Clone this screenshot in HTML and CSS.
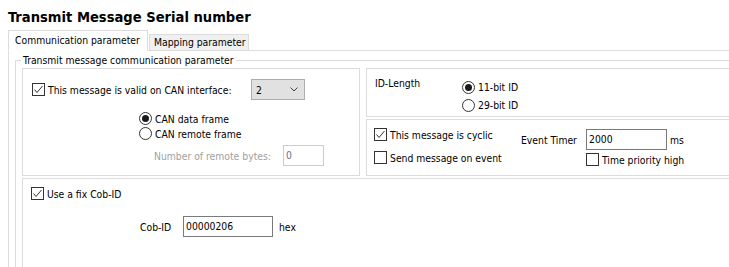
FILE: index.html
```html
<!DOCTYPE html>
<html lang="en">

<head>
    <meta charset="UTF-8" />
    <title>Transmit Message Serial number</title>
    <link rel="stylesheet" href="styles.css">
</head>

<body>
    <h1 class="title">Transmit Message Serial number</h1>

    <div class="tabs">
        <div class="tab active">Communication parameter</div>
        <div class="tab">Mapping parameter</div>
    </div>

    <div class="panel">
        <div class="group">
            <span class="group-title">Transmit message communication parameter</span>

            <div class="top-row">
                <div class="box box-interface">
                    <div class="row-valid">
                        <label class="opt valid-label">
                            <span class="check"><svg width="11" height="11" viewBox="0 0 11 11"><polyline points="1.5,5.5 4,8.5 9.5,2" /></svg></span>
                            This message is valid on CAN interface:
                        </label>
                        <div class="select">
                            <span>2</span>
                            <svg class="chevron" width="8" height="5" viewBox="0 0 8 5"><polyline points="0.5,0.5 4,4 7.5,0.5" /></svg>
                        </div>
                    </div>

                    <div class="radios">
                        <label class="opt radio-row"><span class="radio on"></span>CAN data frame</label>
                        <label class="opt radio-row"><span class="radio"></span>CAN remote frame</label>
                    </div>

                    <div class="remote-row">
                        <span class="remote-label">Number of remote bytes:</span>
                        <div class="input disabled">0</div>
                    </div>
                </div>

                <div class="side">
                    <div class="box box-id">
                        <span class="id-label">ID-Length</span>
                        <div class="id-radios">
                            <label class="opt id-row"><span class="radio on"></span>11-bit ID</label>
                            <label class="opt id-row"><span class="radio"></span>29-bit ID</label>
                        </div>
                    </div>

                    <div class="box box-cyclic">
                        <div class="cyclic-checks">
                            <label class="opt">
                                <span class="check"><svg width="11" height="11" viewBox="0 0 11 11"><polyline points="1.5,5.5 4,8.5 9.5,2" /></svg></span>
                                This message is cyclic
                            </label>
                            <label class="opt"><span class="check"></span>Send message on event</label>
                        </div>
                        <div class="timer">
                            <div class="timer-row">
                                <span class="timer-label">Event Timer</span>
                                <div class="input timer-input">2000</div>
                                <span class="unit">ms</span>
                            </div>
                            <label class="opt priority"><span class="check"></span>Time priority high</label>
                        </div>
                    </div>
                </div>
            </div>

            <div class="box box-cob">
                <label class="opt cob-check">
                    <span class="check"><svg width="11" height="11" viewBox="0 0 11 11"><polyline points="1.5,5.5 4,8.5 9.5,2" /></svg></span>
                    Use a fix Cob-ID
                </label>
                <div class="cob-row">
                    <span class="cob-label">Cob-ID</span>
                    <div class="input cob-input">00000206</div>
                    <span class="unit hex">hex</span>
                </div>
            </div>
        </div>
    </div>
</body>

</html>
```

FILE: styles.css
```css
body {
    margin: 0;
    height: 267px;
    background-color: #ffffff;
    color: #000000;
    font-family: "DejaVu Sans Condensed", "Liberation Sans", sans-serif;
    font-size: 10.3px;
    overflow: hidden;
}

.title {
    margin: 0;
    height: 30px;
    padding: 8px 0 0 8px;
    box-sizing: border-box;
    font-size: 14.6px;
    line-height: 17px;
    font-weight: bold;
}

/* tab strip */

.tabs {
    display: flex;
    align-items: flex-end;
    margin: 0 0 -1px 8px;
    position: relative;
    z-index: 1;
}

.tab {
    box-sizing: border-box;
    border: 1px solid #dcdcdc;
    background-color: #f0f0f0;
    width: 100px;
    height: 17px;
    margin-left: 1px;
    padding-left: 4px;
    line-height: 15px;
}

.tab.active {
    background-color: #ffffff;
    border-bottom-color: #ffffff;
    width: 140px;
    height: 21px;
    margin-left: 0;
    padding-left: 6px;
    line-height: 19px;
}

/* the panel and the group run on past the right and bottom edge */

.panel {
    box-sizing: border-box;
    margin-left: 8px;
    height: 217px;
    border-top: 1px solid #dcdcdc;
    border-left: 1px solid #dcdcdc;
}

.group {
    box-sizing: border-box;
    position: relative;
    margin: 9px 0 0 6px;
    padding: 7px 0 0 6px;
    height: 207px;
    border-top: 1px solid #dcdcdc;
    border-left: 1px solid #dcdcdc;
}

.group-title {
    position: absolute;
    top: -7px;
    left: 5px;
    padding: 0 2px;
    line-height: 13px;
    background-color: #ffffff;
}

.top-row {
    display: flex;
}

.box {
    box-sizing: border-box;
    border: 1px solid #dcdcdc;
}

.side {
    flex: 1;
    display: flex;
    flex-direction: column;
    gap: 2px;
    margin-left: 6px;
}

.side .box {
    border-right: none;
}

/* check boxes and radio buttons */

.opt {
    display: flex;
    align-items: center;
    height: 13px;
    white-space: nowrap;
}

.check,
.radio {
    box-sizing: border-box;
    flex: none;
    display: flex;
    align-items: center;
    justify-content: center;
    width: 13px;
    height: 13px;
    margin-right: 3px;
    border: 1px solid #333333;
    background-color: #ffffff;
}

.check svg {
    fill: none;
    stroke: #333333;
    stroke-width: 1;
}

.radio {
    border-radius: 50%;
}

.radio.on::after {
    content: "";
    width: 7px;
    height: 7px;
    border-radius: 50%;
    background-color: #1a1a1a;
}

.input {
    box-sizing: border-box;
    height: 21px;
    padding-left: 2px;
    line-height: 19px;
    border: 1px solid #7a7a7a;
    background-color: #ffffff;
}

.input.disabled {
    border-color: #cccccc;
    color: #6d6d8d;
}

/* CAN interface box */

.box-interface {
    width: 338px;
    height: 108px;
}

.row-valid {
    display: flex;
    align-items: center;
    height: 21px;
    margin: 10px 0 0 9px;
}

.valid-label {
    width: 219px;
}

.select {
    box-sizing: border-box;
    display: flex;
    align-items: center;
    justify-content: space-between;
    width: 54px;
    height: 21px;
    padding: 0 6px 0 4px;
    border: 1px solid #adadad;
    background-color: #e1e1e1;
}

.chevron {
    fill: none;
    stroke: #404040;
    stroke-width: 1;
}

.radios {
    margin: 11px 0 0 116px;
}

.radio-row {
    height: 15px;
}

.remote-row {
    display: flex;
    align-items: center;
    margin: 4px 0 0 131px;
}

.remote-label {
    width: 129px;
    color: #a0a0a0;
}

.remote-row .input {
    width: 41px;
}

/* ID length box */

.box-id {
    display: flex;
    height: 49px;
}

.id-label {
    box-sizing: border-box;
    width: 95px;
    padding: 7px 0 0 8px;
    line-height: 14px;
}

.id-radios {
    padding-top: 9px;
}

.id-row {
    height: 18px;
}

/* cyclic box */

.box-cyclic {
    display: flex;
    height: 57px;
}

.cyclic-checks {
    box-sizing: border-box;
    display: flex;
    flex-direction: column;
    gap: 10px;
    width: 154px;
    padding: 8px 0 0 7px;
}

.timer {
    padding-top: 9px;
}

.timer-row {
    display: flex;
    align-items: center;
    height: 21px;
}

.timer-label {
    width: 65px;
}

.timer-input {
    width: 81px;
}

.unit {
    margin-left: 3px;
}

.priority {
    margin: 3px 0 0 65px;
}

/* cob-id box */

.box-cob {
    margin-top: 2px;
    height: 89px;
    border-right: none;
    border-bottom: none;
}

.cob-check {
    margin: 8px 0 0 8px;
}

.cob-row {
    display: flex;
    align-items: center;
    height: 21px;
    margin: 16px 0 0 117px;
}

.cob-label {
    width: 43px;
}

.cob-input {
    width: 90px;
}

.unit.hex {
    margin-left: 6px;
}
```
